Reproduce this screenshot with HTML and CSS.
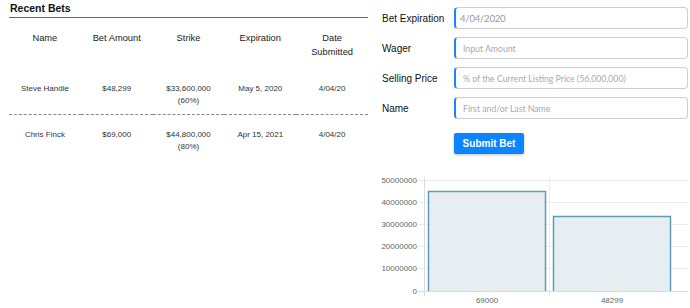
FILE: index.html
```html
<!DOCTYPE html>
<html lang="en">
<head>
    <meta charset="UTF-8">
    <meta name="viewport" content="width=device-width, initial-scale=1.0">
    <title>Recent Bets</title>
    <link rel="stylesheet" href="styles.css">
</head>
<body>
    <div class="page">
        <div class="bets">
            <h2>Recent Bets</h2>
            <table class="betTable">
                <thead>
                    <tr>
                        <th>Name</th>
                        <th>Bet Amount</th>
                        <th>Strike</th>
                        <th>Expiration</th>
                        <th>Date Submitted</th>
                    </tr>
                </thead>
                <tbody>
                    <tr>
                        <td>Steve Handle</td>
                        <td>$48,299</td>
                        <td>$33,600,000<br>(60%)</td>
                        <td>May 5, 2020</td>
                        <td>4/04/20</td>
                    </tr>
                    <tr>
                        <td>Chris Finck</td>
                        <td>$69,000</td>
                        <td>$44,800,000<br>(80%)</td>
                        <td>Apr 15, 2021</td>
                        <td>4/04/20</td>
                    </tr>
                </tbody>
            </table>
        </div>

        <div class="side">
            <form class="betForm">
                <div class="field">
                    <label for="expiration">Bet Expiration</label>
                    <input type="text" id="expiration" class="dateInput" value="4/04/2020">
                </div>
                <div class="field">
                    <label for="wager">Wager</label>
                    <input type="text" id="wager" placeholder="Input Amount">
                </div>
                <div class="field">
                    <label for="price">Selling Price</label>
                    <input type="text" id="price" placeholder="% of the Current Listing Price (56,000,000)">
                </div>
                <div class="field">
                    <label for="name">Name</label>
                    <input type="text" id="name" placeholder="First and/or Last Name">
                </div>
                <button type="button" class="submitBtn">Submit Bet</button>
            </form>

            <svg class="chart" width="312" height="140" viewBox="0 0 312 140">
                <!-- grid -->
                <g stroke="#ececec" stroke-width="1">
                    <line x1="40" y1="11.5" x2="310" y2="11.5"/>
                    <line x1="40" y1="33.5" x2="310" y2="33.5"/>
                    <line x1="40" y1="55.5" x2="310" y2="55.5"/>
                    <line x1="40" y1="77.5" x2="310" y2="77.5"/>
                    <line x1="40" y1="99.5" x2="310" y2="99.5"/>
                    <line x1="171.5" y1="8" x2="171.5" y2="127"/>
                </g>
                <g stroke="#dcdcdc" stroke-width="1">
                    <line x1="46.5" y1="8" x2="46.5" y2="127"/>
                    <line x1="40" y1="122.5" x2="310" y2="122.5"/>
                </g>
                <!-- bars -->
                <path d="M50.5 122 V22.5 H167.5 V122" fill="#e6eef2" stroke="#5f9db7" stroke-width="1.5"/>
                <path d="M175.5 122 V47.5 H292.5 V122" fill="#e6eef2" stroke="#5f9db7" stroke-width="1.5"/>
                <!-- labels -->
                <g class="tickText" text-anchor="end">
                    <text x="39" y="14">50000000</text>
                    <text x="39" y="36">40000000</text>
                    <text x="39" y="58">30000000</text>
                    <text x="39" y="80">20000000</text>
                    <text x="39" y="102">10000000</text>
                    <text x="39" y="124.5">0</text>
                </g>
                <g class="tickText" text-anchor="middle">
                    <text x="109" y="133.5">69000</text>
                    <text x="234" y="133.5">48299</text>
                </g>
            </svg>
        </div>
    </div>
</body>
</html>
```

FILE: styles.css
```css
body {
    margin: 0;
    font-family: "Liberation Sans", Arial, sans-serif;
    background: #fff;
    color: #222;
}

.page {
    display: flex;
    padding-left: 9px;
    gap: 10px;
}

.bets {
    width: 359px;
    flex-shrink: 0;
}

.bets h2 {
    margin: 0;
    padding: 2px 1px 2px;
    font-size: 10.5px;
    line-height: 13px;
    font-weight: bold;
    color: #111;
    border-bottom: 1px solid #666;
}

.betTable {
    width: 100%;
    table-layout: fixed;
    border-collapse: collapse;
}

.betTable th {
    font-size: 9.3px;
    font-weight: normal;
    line-height: 14px;
    color: #222;
    padding: 13px 10px 10px;
    vertical-align: top;
}

.betTable td {
    font-size: 8px;
    line-height: 12px;
    color: #333;
    text-align: center;
    padding: 14px 0 7px;
    vertical-align: top;
}

.betTable tbody tr:first-child td {
    border-bottom: 1px dashed #888;
}

.side {
    width: 312px;
}

.betForm {
    display: flex;
    flex-direction: column;
    gap: 8px;
    padding-top: 7px;
}

.field {
    display: flex;
    align-items: center;
}

.field label {
    width: 76px;
    box-sizing: border-box;
    padding-left: 4px;
    font-size: 10px;
    color: #111;
}

.field input {
    width: 234px;
    height: 22px;
    box-sizing: border-box;
    border: 1px solid #cfcfcf;
    border-left: 2px solid #1a84ff;
    border-radius: 4px;
    padding: 0 0 0 7px;
    font-family: Lato, "Liberation Sans", sans-serif;
    font-size: 8.7px;
    color: #999;
    outline: none;
}

.field input::placeholder {
    color: #aaa;
}

.field .dateInput {
    padding-left: 4px;
    font-size: 9.5px;
    letter-spacing: -0.2px;
}

.submitBtn {
    align-self: flex-start;
    margin: 6px 0 0 76px;
    width: 70px;
    height: 21px;
    border: none;
    border-radius: 2px;
    background-color: #0a84ff;
    color: #fff;
    font-family: "Liberation Sans", Arial, sans-serif;
    font-size: 10px;
    font-weight: bold;
    box-shadow: 0 1px 3px rgba(0, 0, 0, 0.25);
    cursor: pointer;
}

.chart {
    display: block;
    margin-top: 15px;
}

.tickText {
    font-family: "Liberation Sans", Arial, sans-serif;
    font-size: 8px;
    fill: #666;
}
```
